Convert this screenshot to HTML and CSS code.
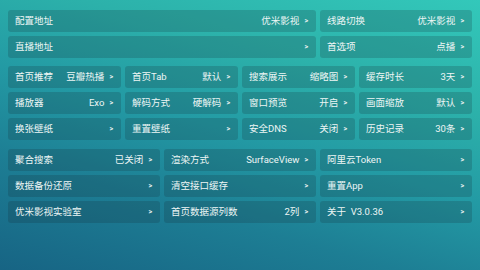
FILE: index.html
```html
<!DOCTYPE html>
<html lang="zh">
<head>
<meta charset="utf-8">
<link rel="stylesheet" href="styles.css">
</head>
<body>
<div class="screen">
  <div class="grid grid3">
    <div class="card span2"><span class="label">配置地址</span><span class="right"><span class="value">优米影视</span><span class="arrow">&gt;</span></span></div>
    <div class="card"><span class="label">线路切换</span><span class="right"><span class="value">优米影视</span><span class="arrow">&gt;</span></span></div>
    <div class="card span2"><span class="label">直播地址</span><span class="right"><span class="arrow">&gt;</span></span></div>
    <div class="card"><span class="label">首选项</span><span class="right"><span class="value">点播</span><span class="arrow">&gt;</span></span></div>
  </div>

  <div class="grid grid4 sec2">
    <div class="card"><span class="label">首页推荐</span><span class="right"><span class="value">豆瓣热播</span><span class="arrow">&gt;</span></span></div>
    <div class="card"><span class="label">首页Tab</span><span class="right"><span class="value">默认</span><span class="arrow">&gt;</span></span></div>
    <div class="card"><span class="label">搜索展示</span><span class="right"><span class="value">缩略图</span><span class="arrow">&gt;</span></span></div>
    <div class="card"><span class="label">缓存时长</span><span class="right"><span class="value">3天</span><span class="arrow">&gt;</span></span></div>

    <div class="card"><span class="label">播放器</span><span class="right"><span class="value">Exo</span><span class="arrow">&gt;</span></span></div>
    <div class="card"><span class="label">解码方式</span><span class="right"><span class="value">硬解码</span><span class="arrow">&gt;</span></span></div>
    <div class="card"><span class="label">窗口预览</span><span class="right"><span class="value">开启</span><span class="arrow">&gt;</span></span></div>
    <div class="card"><span class="label">画面缩放</span><span class="right"><span class="value">默认</span><span class="arrow">&gt;</span></span></div>

    <div class="card"><span class="label">换张壁纸</span><span class="right"><span class="arrow">&gt;</span></span></div>
    <div class="card"><span class="label">重置壁纸</span><span class="right"><span class="arrow">&gt;</span></span></div>
    <div class="card"><span class="label">安全DNS</span><span class="right"><span class="value">关闭</span><span class="arrow">&gt;</span></span></div>
    <div class="card"><span class="label">历史记录</span><span class="right"><span class="value">30条</span><span class="arrow">&gt;</span></span></div>
  </div>

  <div class="grid grid3 sec3">
    <div class="card"><span class="label">聚合搜索</span><span class="right"><span class="value">已关闭</span><span class="arrow">&gt;</span></span></div>
    <div class="card"><span class="label">渲染方式</span><span class="right"><span class="value">SurfaceView</span><span class="arrow">&gt;</span></span></div>
    <div class="card"><span class="label">阿里云Token</span><span class="right"><span class="arrow">&gt;</span></span></div>

    <div class="card"><span class="label">数据备份还原</span><span class="right"><span class="arrow">&gt;</span></span></div>
    <div class="card"><span class="label">清空接口缓存</span><span class="right"><span class="arrow">&gt;</span></span></div>
    <div class="card"><span class="label">重置App</span><span class="right"><span class="arrow">&gt;</span></span></div>

    <div class="card"><span class="label">优米影视实验室</span><span class="right"><span class="arrow">&gt;</span></span></div>
    <div class="card"><span class="label">首页数据源列数</span><span class="right"><span class="value">2列</span><span class="arrow">&gt;</span></span></div>
    <div class="card"><span class="label">关于&nbsp; V3.0.36</span><span class="right"><span class="arrow">&gt;</span></span></div>
  </div>
</div>
</body>
</html>
```

FILE: styles.css
```css
html, body {
  margin: 0;
  padding: 0;
  width: 480px;
  height: 270px;
  overflow: hidden;
}

body {
  font-family: Roboto, "Noto Sans CJK SC", sans-serif;
  color: #eef6f5;
  background: linear-gradient(196deg, #33c8ba 0%, #2cb1aa 28%, #239aa4 50%, #1d7e94 72%, #176484 100%);
}

.screen {
  padding: 10px 8px 0 8px;
}

.grid {
  display: grid;
  gap: 4px;
  grid-auto-rows: 22px;
}

.grid3 {
  grid-template-columns: repeat(3, 1fr);
}

.grid4 {
  grid-template-columns: repeat(4, 1fr);
}

.sec2 {
  margin-top: 8px;
}

.sec3 {
  margin-top: 9px;
}

.span2 {
  grid-column: span 2;
}

.card {
  display: flex;
  align-items: center;
  justify-content: space-between;
  padding: 0 8px 0 7px;
  border-radius: 3px;
  background: rgba(18, 40, 52, 0.2);
  font-size: 9.5px;
  line-height: 1;
  white-space: nowrap;
  overflow: hidden;
}

.right {
  display: flex;
  align-items: center;
  gap: 5px;
}

.arrow {
  font-size: 7px;
  font-weight: bold;
  color: #e6f0f0;
}
```
